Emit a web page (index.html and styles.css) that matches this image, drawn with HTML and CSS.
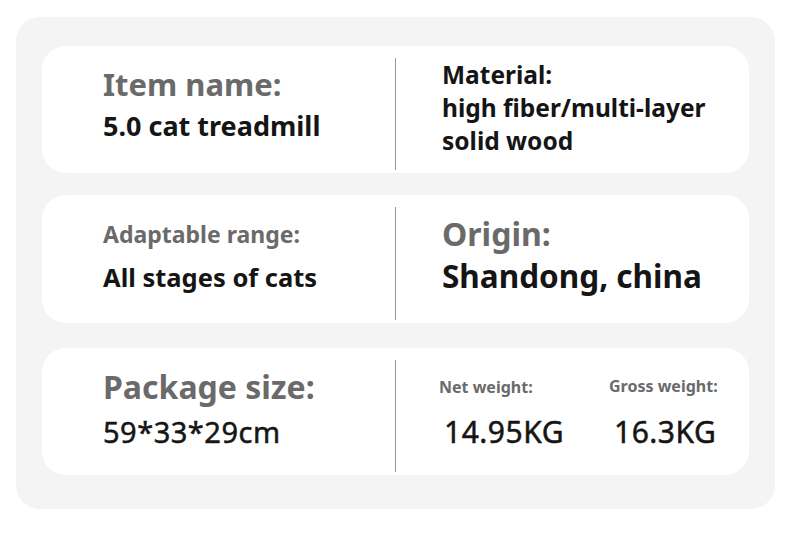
FILE: index.html
```html
<!DOCTYPE html>
<html>
<head>
<meta charset="utf-8">
<link rel="stylesheet" href="styles.css">
</head>
<body>
<div class="panel">
  <div class="card">
    <div class="col left c1">
      <div class="lbl t-item">Item name:</div>
      <div class="val t-item-v">5.0 cat treadmill</div>
    </div>
    <div class="divider"></div>
    <div class="col right c1r">
      <div class="val t-mat">Material:</div>
      <div class="val t-mat">high fiber/multi-layer<br>solid wood</div>
    </div>
  </div>
  <div class="card card2">
    <div class="col left c2">
      <div class="lbl t-range">Adaptable range:</div>
      <div class="val t-range-v">All stages of cats</div>
    </div>
    <div class="divider"></div>
    <div class="col right c2r">
      <div class="lbl t-big">Origin:</div>
      <div class="val t-origin-v">Shandong, china</div>
    </div>
  </div>
  <div class="card card3">
    <div class="col left c3">
      <div class="lbl t-big">Package size:</div>
      <div class="val med t-size-v">59*33*29cm</div>
    </div>
    <div class="divider"></div>
    <div class="col right weights">
      <div class="weight net">
        <div class="lbl t-small">Net weight:</div>
        <div class="val med t-kg">14.95KG</div>
      </div>
      <div class="weight gross">
        <div class="lbl t-small t-gross">Gross weight:</div>
        <div class="val med t-kg">16.3KG</div>
      </div>
    </div>
  </div>
</div>
</body>
</html>
```

FILE: styles.css
```css
html, body {
  margin: 0;
  padding: 0;
  background: #ffffff;
}
body {
  font-family: "Noto Sans", sans-serif;
  width: 790px;
  height: 550px;
  overflow: hidden;
}
.panel {
  margin: 17px 15px 0 16px;
  width: 759px;
  height: 492px;
  box-sizing: border-box;
  background: #f4f4f4;
  border-radius: 24px;
  padding: 29px 26px 0 26px;
  display: flex;
  flex-direction: column;
  gap: 22px;
}
.card {
  height: 127px;
  flex: none;
  background: #ffffff;
  border-radius: 24px;
  display: flex;
}
.card2 { height: 128px; }
.card3 { margin-top: 3px; }
.col {
  display: flex;
  flex-direction: column;
}
.left {
  width: 292px;
  padding-left: 61px;
}
.right {
  flex: 1;
  padding-left: 46px;
}
.divider {
  width: 1px;
  background: #9a9a9a;
  margin: 12px 0 3px 0;
}
.lbl {
  color: #6a6a6a;
  font-weight: 700;
  white-space: nowrap;
}
.val {
  color: #151515;
  font-weight: 700;
  white-space: nowrap;
}
.med {
  font-weight: 400;
  -webkit-text-stroke: 0.5px #151515;
  letter-spacing: 0.5px;
}
.t-item { font-size: 31px; line-height: 36px; }
.t-item-v { font-size: 27px; line-height: 32px; }
.t-mat { font-size: 24.5px; line-height: 33px; }
.t-range { font-size: 23px; line-height: 28px; }
.t-range-v { font-size: 25.5px; line-height: 32px; }
.t-big { font-size: 32px; line-height: 38px; }
.t-origin-v { font-size: 31.5px; line-height: 38px; }
.t-size-v { font-size: 29px; line-height: 34px; }
.t-small { font-size: 16px; line-height: 20px; }
.t-gross { margin-top: -1px; margin-bottom: 1px; }
.t-kg { font-size: 30px; line-height: 36px; margin-left: 5px; }
.c1 { padding-top: 20px; gap: 8px; }
.c1r { padding-top: 12px; }
.c2 { padding-top: 25px; gap: 13px; }
.c2r { padding-top: 20px; gap: 4px; }
.c3 { padding-top: 20px; gap: 9px; }
.weights {
  flex-direction: row;
  padding-left: 43px;
  padding-top: 29px;
}
.weight {
  display: flex;
  flex-direction: column;
  gap: 17px;
}
.net { width: 170px; }
.gross { align-items: flex-start; }
```
